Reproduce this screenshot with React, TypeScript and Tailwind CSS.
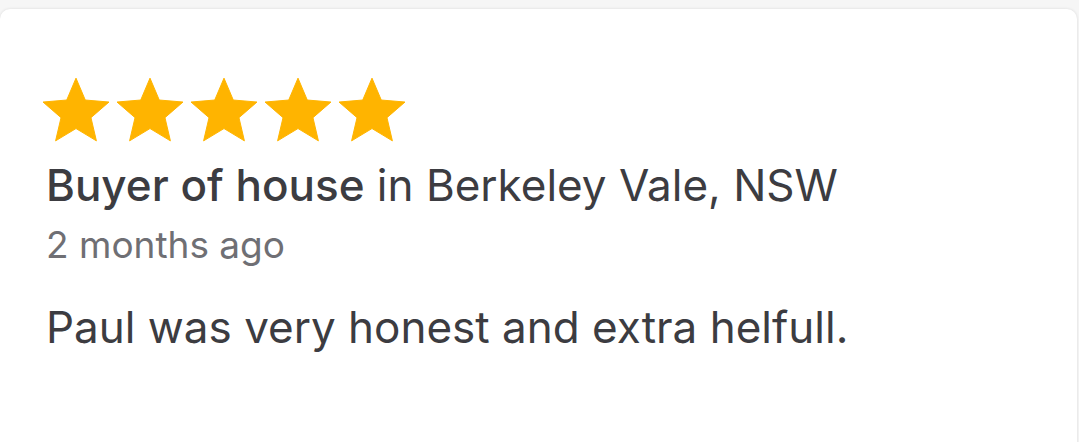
import React from "react"

const STAR_PATH =
  "M12 17.27L18.18 21l-1.64-7.03L22 9.24l-7.19-.61L12 2 9.19 8.63 2 9.24l5.46 4.73L5.82 21z"

function Star() {
  return (
    <svg viewBox="2 2 20 19" className="w-[66px] h-[65px]" fill="#FFB400">
      <path d={STAR_PATH} strokeLinejoin="round" stroke="#FFB400" strokeWidth="0.3" />
    </svg>
  )
}

export default function App() {
  return (
    <div className="w-[1079px] h-[442px] bg-[#f6f6f6] overflow-hidden pt-[9px] pr-[2px]">
      <div
        className="h-[460px] bg-white rounded-[10px] shadow-[0_0_3px_rgba(0,0,0,0.12)] pl-[46px] pt-[68px]"
        style={{ fontFamily: "Inter, Roboto, sans-serif" }}
      >
        {/* Rating */}
        <div className="flex gap-[8px] -ml-[3px]">
          {Array.from({ length: 5 }).map((_, i) => (
            <Star key={i} />
          ))}
        </div>

        <div className="mt-[17px] text-[44px] leading-[52px] text-[#3c3c41]">
          <span className="font-medium">Buyer of house</span> in Berkeley Vale, NSW
        </div>
        <div className="mt-[12px] text-[37px] leading-[44px] text-[#6f6f74]">2 months ago</div>

        <p className="mt-[34px] text-[44px] leading-[52px] text-[#3c3c41]">
          Paul was very honest and extra helfull.
        </p>
      </div>
    </div>
  )
}
